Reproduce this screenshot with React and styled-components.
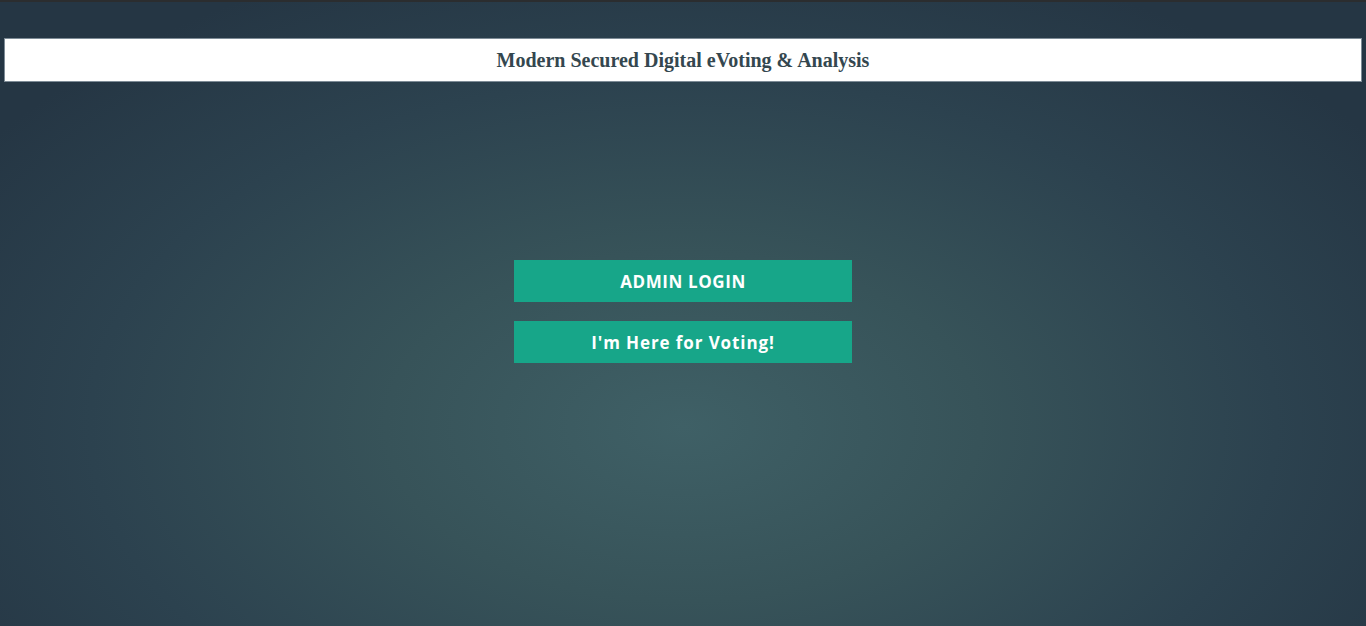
import styled, { createGlobalStyle } from 'styled-components';

/*
 * Global
 */
const GlobalStyle = createGlobalStyle`
  html, body {
    margin: 0;
    padding: 0;
    height: 100%;
  }
  body {
    font-family: "Liberation Serif", serif;
  }
`;

/*
 * Styled Component
 */
const Page = styled.div`
  min-height: 626px;
  box-sizing: border-box;
  border-top: 2px solid #2b2d2f;
  padding: 36px 4px 0;
  background: radial-gradient(ellipse 62% 80% at 50% 68%, #3f6066 0%, #375359 35%, #2c424f 70%, #253644 100%);
`;

const Header = styled.header`
  display: flex;
  align-items: center;
  justify-content: center;
  height: 42px;
  background-color: #fff;
  border: 1px solid #7d8b96;
`;

const Title = styled.h1`
  margin: 0;
  font-family: "Liberation Serif", "Times New Roman", serif;
  font-size: 20px;
  font-weight: 700;
  color: #34474f;
`;

const Buttons = styled.div`
  display: flex;
  flex-direction: column;
  align-items: center;
  gap: 19px;
  margin-top: 178px;
`;

const Button = styled.button`
  width: 338px;
  height: 42px;
  border: none;
  background-color: #17a689;
  color: #fff;
  font-family: "Open Sans", sans-serif;
  font-size: 17px;
  font-weight: 700;
  letter-spacing: ${(p) => (p.$caps ? '0.6px' : '0.9px')};
  cursor: pointer;

  &:hover {
    opacity: 0.9;
  }
`;

const App = () => {
  return (
    <>
      <GlobalStyle />
      <Page>
        <Header>
          <Title>Modern Secured Digital eVoting &amp; Analysis</Title>
        </Header>
        <Buttons>
          <Button $caps>ADMIN LOGIN</Button>
          <Button>I'm Here for Voting!</Button>
        </Buttons>
      </Page>
    </>
  );
};

export default App;
